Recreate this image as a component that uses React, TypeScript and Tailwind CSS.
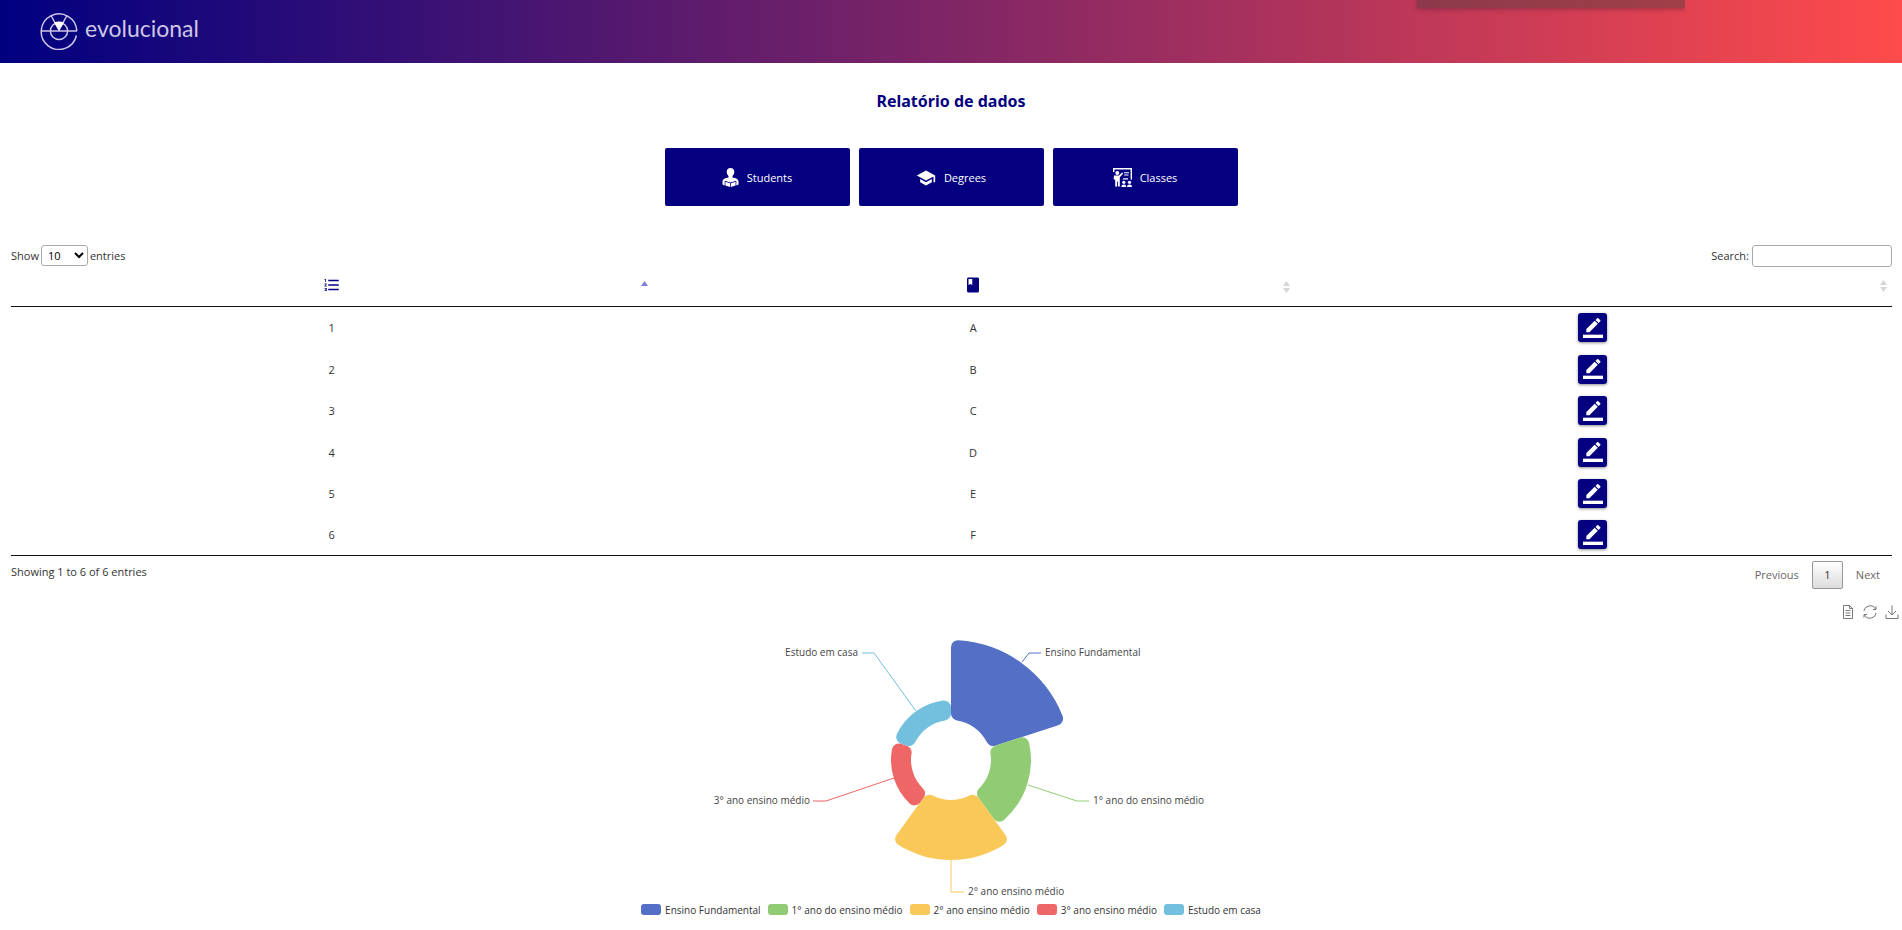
import { MdClass, MdFormatListNumbered, MdSchool } from "react-icons/md";

type Slice = {
  name: string;
  color: string;
  outer: number;
  line: string;
  x: number;
  y: number;
  anchor: "start" | "end";
};

const slices: Slice[] = [
  { name: "Ensino Fundamental", color: "#5470c6", outer: 120, line: "371,41 378,32 390,32", x: 394, y: 35, anchor: "start" },
  { name: "1° ano do ensino médio", color: "#91cc75", outer: 80, line: "377,164 426,180 438,180", x: 442, y: 183, anchor: "start" },
  { name: "2° ano ensino médio", color: "#fac858", outer: 100, line: "300,238 300,271 313,271", x: 317, y: 274, anchor: "start" },
  { name: "3° ano ensino médio", color: "#ee6666", outer: 60, line: "243,157 175,180 162,180", x: 159, y: 183, anchor: "end" },
  { name: "Estudo em casa", color: "#73c0de", outer: 60, line: "265,90 223,32 211,32", x: 207, y: 35, anchor: "end" },
];

const rows = ["A", "B", "C", "D", "E", "F"];

const CX = 300;
const CY = 139;
const INNER = 40;
const CORNER = 7;

function point(radius: number, angle: number) {
  return `${(CX + radius * Math.sin(angle)).toFixed(2)} ${(CY - radius * Math.cos(angle)).toFixed(2)}`;
}

// Ring sector with all four corners rounded.
function sector(index: number, outer: number) {
  const a0 = (index * 2 * Math.PI) / 5;
  const a1 = ((index + 1) * 2 * Math.PI) / 5;
  const c = CORNER;
  const dOut = Math.asin(c / (outer - c));
  const dIn = Math.asin(c / (INNER + c));
  const rOut = Math.sqrt((outer - c) ** 2 - c ** 2);
  const rIn = Math.sqrt((INNER + c) ** 2 - c ** 2);
  return [
    `M${point(rIn, a0)}`,
    `L${point(rOut, a0)}`,
    `A${c} ${c} 0 0 1 ${point(outer, a0 + dOut)}`,
    `A${outer} ${outer} 0 0 1 ${point(outer, a1 - dOut)}`,
    `A${c} ${c} 0 0 1 ${point(rOut, a1)}`,
    `L${point(rIn, a1)}`,
    `A${c} ${c} 0 0 1 ${point(INNER, a1 - dIn)}`,
    `A${INNER} ${INNER} 0 0 0 ${point(INNER, a0 + dIn)}`,
    `A${c} ${c} 0 0 1 ${point(rIn, a0)}`,
    "Z",
  ].join(" ");
}

function Logo() {
  return (
    <a href="#" aria-label="evolucional" className="flex items-center gap-[7px] pb-px text-[#cdc6e6]">
      <svg viewBox="0 0 38 38" className="size-[38px]" fill="none" stroke="currentColor" strokeWidth="1.5">
        <path d="M36.8 19A17.8 17.8 0 1 0 36.4 23.5" />
        <circle cx="19" cy="19" r="8.6" />
        <path d="M1 19H37M11 3.5L19 18L27 3.5" />
        <path d="M14 10.5Q19 8.500 24 10.500L19 18.500Z" fill="#fff" stroke="none" />
      </svg>
      <span className="pb-[6px] font-['Lato',sans-serif] text-[23px] leading-6">evolucional</span>
    </a>
  );
}

function StudentIcon() {
  return (
    <svg viewBox="0 0 17 19" className="h-[19px] w-[17px]" fill="currentColor" aria-hidden="true">
      <path d="M8.500 0C10.800 0 12.300 1.500 12.300 3.800C12.300 5.600 11.500 7 10.500 7.900V9.400C13.800 10 16.200 10.700 16.500 13.500V16.500L14.300 17.500V12.800L8.500 14.600L2.700 12.800V17.500L.5 16.500V13.500C.8 10.700 3.200 10 6.500 9.400V7.900C5.500 7 4.700 5.600 4.700 3.800C4.700 1.500 6.200 0 8.500 0Z" />
      <path d="M3.400 13.700L8.100 15.200V19L3.400 17.600ZM13.600 13.700L8.900 15.200V19L13.600 17.600Z" />
    </svg>
  );
}

function ClassIcon() {
  return (
    <svg viewBox="0 0 19 19" className="size-[19px]" fill="currentColor" aria-hidden="true">
      <path d="M0 0H19V11.500H17.600V1.400H1.400V4H0ZM10.500 10.300H15V11.500H9.500Z" />
      <circle cx="4.300" cy="4.900" r="2" />
      <path d="M1 7.500H5.800L9.300 4.600L10.200 5.500L6.800 9.300V18.500H4.900V13.500H4.100V18.500H2.200V12L.6 11Z" />
      <path d="M11 4.300H16V5.300H11ZM11.500 6.500H15.500V7.500H10.800Z" />
      <circle cx="10.800" cy="14.300" r="1.600" />
      <circle cx="16.500" cy="14.300" r="1.600" />
      <path d="M8.300 19Q8.300 16.500 10.800 16.500T13.300 19ZM14 19Q14 16.500 16.500 16.500T19 19Z" />
    </svg>
  );
}

function EditIcon() {
  return (
    <svg viewBox="0 0 24 24" className="size-5" fill="currentColor" aria-hidden="true">
      <path d="M17.750 7L14 3.250l-10 10V17h3.750l10-10zm2.960-2.960a1 1 0 0 0 0-1.410L18.370.29a1 1 0 0 0-1.410 0L15 2.250 18.750 6l1.960-1.960z" />
      <path d="M0 20h24v4H0z" />
    </svg>
  );
}

function SortIcon({ active = false }: { active?: boolean }) {
  return active ? (
    <svg viewBox="0 0 7 12" className="h-3 w-[7px] fill-[#7d7ddb]" aria-hidden="true">
      <path d="M0 5L3.500 0L7 5Z" />
    </svg>
  ) : (
    <svg viewBox="0 0 7 12" className="h-3 w-[7px] fill-[#d6d6d6]" aria-hidden="true">
      <path d="M0 5L3.500 0L7 5ZM0 7L3.500 12L7 7Z" />
    </svg>
  );
}

const cardClass =
  "flex h-[58px] w-[185px] items-center justify-center gap-2 rounded-[2px] bg-[#050080] pt-px text-[11px] text-white";

export default function App() {
  return (
    <div className="min-h-screen bg-white font-['Open_Sans',sans-serif] text-[11px] leading-4 text-[#333]">
      <header className="relative flex h-[63px] items-center overflow-hidden bg-linear-to-r/srgb from-[#000080] to-[#ff4b4b] px-10">
        <Logo />
        <div className="absolute top-0 right-[217px] h-5 w-[272px] overflow-hidden">
          <div className="ml-1 h-2 bg-[#4f3c3c]/45 shadow-[0_1px_5px_rgba(60,20,40,0.4)]" />
        </div>
      </header>

      <main>
        <h1 className="pt-[26px] text-center font-['Noto_Sans',sans-serif] text-base leading-6 font-bold text-[#050080]">
          Relatório de dados
        </h1>

        <nav className="flex justify-center gap-[9px] pt-[35px]">
          <button type="button" className={cardClass}>
            <StudentIcon />
            Students
          </button>
          <button type="button" className={cardClass}>
            <MdSchool className="size-5" />
            Degrees
          </button>
          <button type="button" className={cardClass}>
            <ClassIcon />
            Classes
          </button>
        </nav>

        <section className="pt-[39px] pr-[10px] pl-[11px]">
          <div className="flex items-start justify-between">
            <label className="flex items-center gap-[2px]">
              Show
              <select className="h-[21px] w-[47px] rounded-[3px] border border-[#aaa] bg-white pl-[2px] text-[11px] text-black">
                <option>10</option>
                <option>25</option>
                <option>50</option>
                <option>100</option>
              </select>
              entries
            </label>
            <label className="flex items-center gap-[3px]">
              Search:
              <input type="search" className="h-[22px] w-[140px] rounded-[3px] border border-[#aaa] bg-transparent px-1" />
            </label>
          </div>

          <table className="w-full table-fixed border-collapse border-b border-[#111] text-center">
            <thead>
              <tr className="h-[39px] border-b border-[#111]">
                <th className="w-[34.1%] p-0" aria-label="Número">
                  <div className="grid grid-cols-[1fr_auto_1fr] items-center px-1 pb-[2px]">
                    <MdFormatListNumbered className="col-start-2 size-[18px] text-[#050080]" />
                    <span className="justify-self-end pt-1">
                      <SortIcon active />
                    </span>
                  </div>
                </th>
                <th className="w-[34.1%] p-0" aria-label="Classe">
                  <div className="grid grid-cols-[1fr_auto_1fr] items-center px-1 pb-[2px]">
                    <MdClass className="col-start-2 size-[18px] text-[#050080]" />
                    <span className="justify-self-end pt-1">
                      <SortIcon />
                    </span>
                  </div>
                </th>
                <th className="p-0" aria-label="Editar">
                  <div className="flex justify-end pr-[5px]">
                    <SortIcon />
                  </div>
                </th>
              </tr>
            </thead>
            <tbody>
              {rows.map((letter, i) => (
                <tr key={letter} className="h-[42px] even:h-[41px]">
                  <td className="p-0 pt-[2px]">{i + 1}</td>
                  <td className="p-0 pt-[2px]">{letter}</td>
                  <td className="p-0 pt-px">
                    <button
                      type="button"
                      aria-label={`Editar ${letter}`}
                      className="mx-auto flex size-[29px] items-center justify-center rounded-[3px] bg-[#050080] text-white shadow-[0_1px_3px_rgba(0,0,0,0.45)]"
                    >
                      <EditIcon />
                    </button>
                  </td>
                </tr>
              ))}
            </tbody>
          </table>

          <div className="flex items-start justify-between pt-1">
            <p className="pt-1">Showing 1 to 6 of 6 entries</p>
            <div className="flex items-center gap-[13px] pt-px pr-3 text-[#666]">
              <button type="button">Previous</button>
              <button
                type="button"
                className="h-7 w-[31px] rounded-[2px] border border-[#979797] bg-linear-to-b from-white to-[#dcdcdc] text-[#333]"
              >
                1
              </button>
              <button type="button">Next</button>
            </div>
          </div>
        </section>

        <section>
          <div className="flex h-8 items-end justify-end gap-2 pr-[3px] pb-[2px] text-[#777]">
            <button type="button" aria-label="Data View">
              <svg viewBox="0 0 14 14" className="size-[14px]" fill="none" stroke="currentColor">
                <path d="M2.500 .5H8.500L11.500 3.500V13.500H2.500ZM8.500 .5V3.500H11.500M4.500 5.500H9.500M4.500 8H9.500M4.500 10.500H9.500" />
              </svg>
            </button>
            <button type="button" aria-label="Restore">
              <svg viewBox="0 0 14 14" className="size-[14px]" fill="none" stroke="currentColor">
                <path d="M.8 6A6.300 6.300 0 0 1 12.600 4.200M13.200 8A6.300 6.300 0 0 1 1.400 9.800M13 1.200V4.500H10M1 12.800V9.500H4" />
              </svg>
            </button>
            <button type="button" aria-label="Save as Image">
              <svg viewBox="0 0 14 14" className="size-[14px]" fill="none" stroke="currentColor">
                <path d="M7 .5V10M3 6L7 10L11 6M1 9.500V13.500H13V9.500" />
              </svg>
            </button>
          </div>

          <svg viewBox="0 0 600 280" className="mx-auto h-[280px] w-[600px]" role="img" aria-label="Alunos por etapa de ensino">
            {slices.map((s, i) => (
              <g key={s.name}>
                <path d={sector(i, s.outer)} fill={s.color} />
                <polyline points={s.line} fill="none" stroke={s.color} />
                <text x={s.x} y={s.y} textAnchor={s.anchor} className="fill-[#444] text-[10px]">
                  {s.name}
                </text>
              </g>
            ))}
          </svg>

          <ul className="flex justify-center gap-[7px] pt-px text-[10px]">
            {slices.map((s) => (
              <li key={s.name} className="flex items-center gap-1">
                <svg viewBox="0 0 20 11" className="h-[11px] w-5" aria-hidden="true">
                  <rect width="20" height="11" rx="3" fill={s.color} />
                </svg>
                {s.name}
              </li>
            ))}
          </ul>
        </section>
      </main>
    </div>
  );
}
